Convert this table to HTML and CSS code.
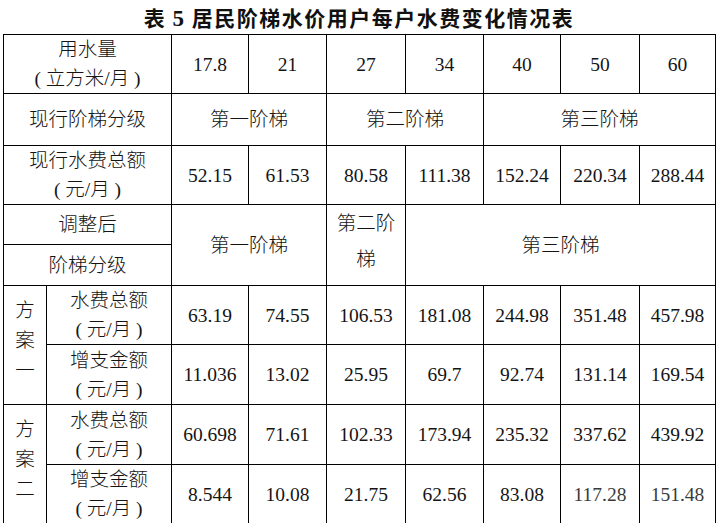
FILE: index.html
```html
<!DOCTYPE html>
<html lang="zh-CN">
<head>
<meta charset="utf-8">
<title>表5 居民阶梯水价用户每户水费变化情况表</title>
<link rel="stylesheet" href="styles.css">
</head>
<body>
<div class="page">
  <h1 class="title">表 <span class="num">5</span> 居民阶梯水价用户每户水费变化情况表</h1>
  <table class="grid">
    <colgroup>
      <col class="c-plan">
      <col class="c-label">
      <col class="c77">
      <col class="c78">
      <col class="c79">
      <col class="c78">
      <col class="c77">
      <col class="c79">
      <col class="c76">
    </colgroup>
    <tbody>
      <tr class="r1">
        <td colspan="2">用水量<br>( 立方米/月 )</td>
        <td>17.8</td><td>21</td><td>27</td><td>34</td><td>40</td><td>50</td><td>60</td>
      </tr>
      <tr class="r2">
        <td colspan="2">现行阶梯分级</td>
        <td colspan="2">第一阶梯</td>
        <td colspan="2">第二阶梯</td>
        <td colspan="3">第三阶梯</td>
      </tr>
      <tr class="r3">
        <td colspan="2">现行水费总额<br>( 元/月 )</td>
        <td>52.15</td><td>61.53</td><td>80.58</td><td>111.38</td><td>152.24</td><td>220.34</td><td>288.44</td>
      </tr>
      <tr class="r4a">
        <td colspan="2">调整后</td>
        <td colspan="2" rowspan="2">第一阶梯</td>
        <td rowspan="2" class="wrap">第二阶梯</td>
        <td colspan="4" rowspan="2">第三阶梯</td>
      </tr>
      <tr class="r4b">
        <td colspan="2">阶梯分级</td>
      </tr>
      <tr class="r5">
        <td rowspan="2" class="plan">方案一</td>
        <td>水费总额<br>( 元/月 )</td>
        <td>63.19</td><td>74.55</td><td>106.53</td><td>181.08</td><td>244.98</td><td>351.48</td><td>457.98</td>
      </tr>
      <tr class="r6">
        <td>增支金额<br>( 元/月 )</td>
        <td>11.036</td><td>13.02</td><td>25.95</td><td>69.7</td><td>92.74</td><td>131.14</td><td>169.54</td>
      </tr>
      <tr class="r7">
        <td rowspan="2" class="plan">方案二</td>
        <td>水费总额<br>( 元/月 )</td>
        <td>60.698</td><td>71.61</td><td>102.33</td><td>173.94</td><td>235.32</td><td>337.62</td><td>439.92</td>
      </tr>
      <tr class="r8">
        <td>增支金额<br>( 元/月 )</td>
        <td>8.544</td><td>10.08</td><td>21.75</td><td>62.56</td><td>83.08</td><td class="faded">117.28</td><td class="faded">151.48</td>
      </tr>
    </tbody>
  </table>
</div>
</body>
</html>
```

FILE: styles.css
```css
html, body {
  margin: 0;
  padding: 0;
  background: #ffffff;
}

.page {
  width: 717px;
  height: 523px;
  padding-left: 3px;
  box-sizing: border-box;
  overflow: hidden;
}

.title {
  margin: 0;
  width: 712px;
  height: 34px;
  line-height: 34px;
  text-align: center;
  font-family: "Noto Sans CJK SC", sans-serif;
  font-weight: 700;
  font-size: 21px;
  letter-spacing: 1.5px;
  color: #111;
}

.title .num {
  font-family: "Liberation Serif", serif;
  font-weight: 700;
  font-size: 23px;
}

.grid {
  width: 712px;
  table-layout: fixed;
  border-collapse: collapse;
  font-family: "Liberation Serif", "Noto Sans CJK SC", serif;
  font-size: 19.5px;
  font-weight: 300;
  color: #141414;
}

.c-plan { width: 43px; }
.c-label { width: 125px; }
.c76 { width: 76px; }
.c77 { width: 77px; }
.c78 { width: 78px; }
.c79 { width: 79px; }

.grid td {
  border: 1px solid #000;
  padding: 0 4px;
  text-align: center;
  vertical-align: middle;
  line-height: 29px;
}

.r1 { height: 59px; }
.r2 { height: 52px; }
.r3 { height: 59px; }
.r4a { height: 40px; }
.r4b { height: 41px; }
.r5 { height: 58px; }
.r6 { height: 60px; }
.r7 { height: 60px; }
.r8 { height: 59px; }

.grid td.wrap {
  line-height: 36px;
  padding-bottom: 6px;
}

.grid td.plan {
  line-height: 30px;
  padding: 0 4px 8px;
}

.grid td.faded {
  color: #3a3a3a;
}
```
